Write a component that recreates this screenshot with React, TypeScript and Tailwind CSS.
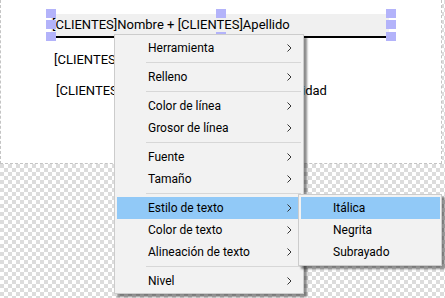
import React from 'react';

type Item = { label: string; sep?: boolean; active?: boolean };

const items: Item[] = [
  { label: 'Herramienta' },
  { label: 'Relleno', sep: true },
  { label: 'Color de línea', sep: true },
  { label: 'Grosor de línea' },
  { label: 'Fuente', sep: true },
  { label: 'Tamaño' },
  { label: 'Estilo de texto', sep: true, active: true },
  { label: 'Color de texto' },
  { label: 'Alineación de texto' },
  { label: 'Nivel', sep: true },
];

const subItems = ['Itálica', 'Negrita', 'Subrayado'];

function Chevron() {
  return (
    <svg width="5" height="8" viewBox="0 0 5 8" className="shrink-0">
      <path d="M0.5 0.5 L4 4 L0.5 7.5" fill="none" stroke="#333" strokeWidth="1" />
    </svg>
  );
}

// selection handle on the selected report field
function Handle({ x, y }: { x: number; y: number }) {
  return <div className="absolute h-[9px] w-[10px] bg-[#b3b3fa]" style={{ left: x, top: y }} />;
}

export default function App() {
  return (
    <div className="relative h-[298px] w-[445px] overflow-hidden bg-[conic-gradient(#dcdcdc_25%,white_0_50%,#dcdcdc_0_75%,white_0)] bg-[length:8px_8px] font-['Roboto',sans-serif] text-black">
      {/* report canvas */}
      <div className="relative h-[164px] w-[442px] border-x border-b border-dashed border-[#c4c4c4] bg-white text-[13px]">
        <div className="flex flex-col items-start pl-[50px] pt-[14px]">
          <div className="h-[24px] w-[338px] border-b-2 border-black bg-[#f0f0f0] pl-[1px] leading-[22px]">
            [CLIENTES]Nombre + [CLIENTES]Apellido
          </div>
          <div className="mt-[13px] pl-[3px] leading-[18px]">[CLIENTES]Dirección</div>
          <div className="mt-[13px] pl-[5px] leading-[18px]">[CLIENTES]Teléfono + [CLIENTES]Nacionalidad</div>
        </div>
        <Handle x={45} y={9} />
        <Handle x={45} y={20} />
        <Handle x={45} y={32} />
        <Handle x={215} y={9} />
        <Handle x={215} y={32} />
        <Handle x={385} y={9} />
        <Handle x={385} y={20} />
        <Handle x={385} y={32} />
      </div>

      {/* context menu */}
      <div className="absolute left-[114px] top-[34px] w-[190px] border border-[#cccccc] bg-[#f2f2f2] pb-[1px] pl-[2px] pr-[1px] pt-[2px] text-[12px] shadow-[3px_3px_2px_rgba(0,0,0,0.45)]">
        {items.map((it, i) => (
          <React.Fragment key={it.label}>
            {it.sep && i > 0 && (
              <div className="py-[3px] pl-[29px] pr-[1px]">
                <div className="h-px bg-[#d7d7d7]" />
              </div>
            )}
            <div
              className={`flex h-[22px] items-center pl-[31px] pr-[10px] ${it.active ? 'bg-[#91c9f7]' : ''}`}
            >
              <span className="flex-1">{it.label}</span>
              <Chevron />
            </div>
          </React.Fragment>
        ))}
      </div>

      {/* submenu */}
      <div className="absolute left-[298px] top-[194px] w-[144px] border border-[#cccccc] bg-[#f2f2f2] pb-[2px] pl-[2px] pr-[1px] pt-[2px] text-[12px] shadow-[3px_3px_2px_rgba(0,0,0,0.45)]">
        {subItems.map((s, i) => (
          <div key={s} className={`flex h-[22px] items-center pl-[32px] ${i === 0 ? 'bg-[#91c9f7]' : ''}`}>
            {s}
          </div>
        ))}
      </div>
    </div>
  );
}
